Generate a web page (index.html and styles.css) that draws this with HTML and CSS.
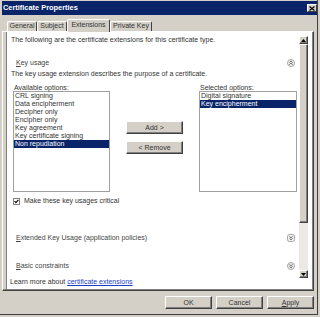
FILE: index.html
```html
<!DOCTYPE html>
<html>
<head>
<meta charset="utf-8">
<link rel="stylesheet" href="styles.css">
</head>
<body>
<div class="window">
  <div class="titlebar">
    <span class="title">Certificate Properties</span>
    <span class="close"><svg width="6" height="5" viewBox="0 0 6 5"><path d="M0.5 0.5 L5.5 4.5 M5.5 0.5 L0.5 4.5" stroke="#000" stroke-width="1.1" fill="none"/></svg></span>
  </div>
  <div class="tabs">
    <div class="tab t-general">General</div>
    <div class="tab t-subject">Subject</div>
    <div class="tab active t-ext">Extensions</div>
    <div class="tab t-pk">Private Key</div>
  </div>
  <div class="panel">
    <div class="page">
      <div class="content">
        <p class="intro">The following are the certificate extensions for this certificate type.</p>
        <div class="head ku">
          <span><u>K</u>ey usage</span>
          <svg class="exp" width="8" height="8" viewBox="0 0 8 8"><circle cx="4" cy="4" r="3.5" fill="#f2f2f2" stroke="#9a9a9a" stroke-width="0.9"/><path d="M2.4 3.6 L4 2.2 L5.6 3.6 M2.4 5.6 L4 4.2 L5.6 5.6" stroke="#555" stroke-width="0.9" fill="none"/></svg>
        </div>
        <p class="desc">The key usage extension describes the purpose of a certificate.</p>
        <div class="options">
          <div class="col">
            <div class="lbl">Available options:</div>
            <div class="listbox">
              <div class="item">CRL signing</div>
              <div class="item">Data encipherment</div>
              <div class="item">Decipher only</div>
              <div class="item">Encipher only</div>
              <div class="item">Key agreement</div>
              <div class="item">Key certificate signing</div>
              <div class="item sel">Non repudiation</div>
            </div>
          </div>
          <div class="movebtns">
            <button class="btn">Add &gt;</button>
            <button class="btn">&lt; Remove</button>
          </div>
          <div class="col right">
            <div class="lbl">Selected options:</div>
            <div class="listbox">
              <div class="item">Digital signature</div>
              <div class="item sel">Key encipherment</div>
            </div>
          </div>
        </div>
        <div class="check">
          <span class="box"><svg width="5" height="5" viewBox="0 0 5 5"><path d="M0.6 2.2 L1.9 3.6 L4.4 0.9" stroke="#000" stroke-width="1.1" fill="none"/></svg></span>
          <span>Make these key usages critical</span>
        </div>
        <div class="head eku">
          <span><u>E</u>xtended Key Usage (application policies)</span>
          <svg class="exp" width="8" height="8" viewBox="0 0 8 8"><rect x="0.5" y="0.5" width="7" height="7" rx="2" fill="#f2f2f2" stroke="#9a9a9a" stroke-width="0.9"/><path d="M2.4 2.4 L4 3.8 L5.6 2.4 M2.4 4.4 L4 5.8 L5.6 4.4" stroke="#555" stroke-width="0.9" fill="none"/></svg>
        </div>
        <div class="head bc">
          <span><u>B</u>asic constraints</span>
          <svg class="exp" width="8" height="8" viewBox="0 0 8 8"><circle cx="4" cy="4" r="3.5" fill="#f2f2f2" stroke="#9a9a9a" stroke-width="0.9"/><path d="M2.4 2.4 L4 3.8 L5.6 2.4 M2.4 4.4 L4 5.8 L5.6 4.4" stroke="#555" stroke-width="0.9" fill="none"/></svg>
        </div>
        <p class="learn">Learn more about <a class="link">certificate extensions</a></p>
      </div>
      <div class="scrollbar">
        <div class="sb-btn"><svg width="5" height="3" viewBox="0 0 5 3"><path d="M0 3 L2.5 0 L5 3 Z" fill="#000"/></svg></div>
        <div class="sb-thumb"></div>
        <div class="sb-track"></div>
        <div class="sb-btn"><svg width="5" height="3" viewBox="0 0 5 3"><path d="M0 0 L2.5 3 L5 0 Z" fill="#000"/></svg></div>
      </div>
    </div>
  </div>
  <div class="footer">
    <button class="btn dlg">OK</button>
    <button class="btn dlg">Cancel</button>
    <button class="btn dlg"><u>A</u>pply</button>
  </div>
</div>
</body>
</html>
```

FILE: styles.css
```css
* { box-sizing: border-box; }
html, body { margin: 0; padding: 0; }
body {
  width: 320px;
  height: 317px;
  overflow: hidden;
  background: #d4d0c8;
  font-family: "Liberation Sans", Arial, sans-serif;
  font-size: 7px;
  line-height: 8px;
  color: #333;
}
p { margin: 0; }

.window {
  width: 318px;
  height: 315px;
  border-right: 1px solid #404040;
  border-bottom: 1px solid #404040;
  padding-top: 1px;
}

.titlebar {
  margin-left: 2px;
  width: 315px;
  height: 14px;
  background: #0a246a;
  display: flex;
  align-items: center;
  justify-content: space-between;
}
.title {
  color: #fff;
  font-weight: bold;
  font-size: 7.4px;
  padding-left: 1px;
}
.close {
  width: 10px;
  height: 8px;
  background: #d4d0c8;
  border: 1px solid;
  border-color: #fff #404040 #404040 #fff;
  display: flex;
  align-items: center;
  justify-content: center;
}

.tabs {
  display: flex;
  align-items: flex-end;
  margin: 4px 0 0 7px;
  height: 12px;
  position: relative;
  z-index: 2;
}
.tab {
  height: 10px;
  line-height: 8px;
  text-align: center;
  background: #d4d0c8;
  border-top: 1px solid #fff;
  border-left: 1px solid #fff;
  border-right: 1px solid #404040;
  border-radius: 2px 2px 0 0;
}
.t-general { width: 30px; }
.t-subject { width: 30px; }
.t-ext { width: 43px; }
.t-pk { width: 42px; }
.tab.active {
  height: 13px;
  margin-bottom: -1px;
  line-height: 10px;
}

.panel {
  margin-left: 2px;
  width: 312px;
  height: 260px;
  border: 1px solid;
  border-color: #fff #404040 #404040 #fff;
  box-shadow: inset -1px -1px #808080;
  padding: 0 1px 1px 3px;
  position: relative;
  z-index: 1;
}
.page {
  height: 257px;
  background: #fff;
  border-left: 1px solid #808080;
  display: flex;
}
.content {
  width: 292px;
}

.intro { margin-top: 4px; padding-left: 4px; }
.head {
  display: flex;
  align-items: center;
  justify-content: space-between;
  height: 8px;
  padding-left: 9px;
  padding-right: 4px;
  color: #444;
}
.head u, .dlg u { text-decoration-thickness: 1px; text-underline-offset: 1px; }
.ku { margin-top: 15px; }
.desc { margin-top: 3px; padding-left: 4px; }

.options {
  display: flex;
  gap: 16px;
  margin-top: 6px;
  padding-left: 6px;
}
.col { width: 97px; }
.col.right { width: 98px; }
.lbl { height: 7px; line-height: 7px; padding-left: 1px; }
.listbox {
  height: 101px;
  border: 1px solid #a0a0a0;
  background: #fff;
}
.item {
  height: 8px;
  line-height: 8px;
  padding-left: 1px;
  white-space: nowrap;
}
.item.sel { background: #0a246a; color: #fff; }

.movebtns {
  width: 57px;
  padding-top: 37px;
  display: flex;
  flex-direction: column;
  gap: 7px;
}
.btn {
  font: inherit;
  color: #333;
  height: 13px;
  padding: 0;
  background: #d4d0c8;
  border: 1px solid;
  border-color: #fff #404040 #404040 #fff;
  box-shadow: inset -1px -1px #808080;
  line-height: 10px;
}

.check {
  display: flex;
  align-items: center;
  gap: 4px;
  margin-top: 5px;
  padding-left: 6px;
  height: 8px;
}
.box {
  width: 7px;
  height: 7px;
  border: 1px solid #808080;
  background: #fff;
  display: flex;
  align-items: center;
  justify-content: center;
}
.eku { margin-top: 29px; }
.bc { margin-top: 20px; }
.learn { margin-top: 8px; padding-left: 3px; }
.link { color: #1a3fc4; text-decoration: underline; }

.scrollbar {
  width: 9px;
  height: 242px;
  margin: 4px 4px 0 0;
  display: flex;
  flex-direction: column;
}
.sb-btn, .sb-thumb {
  background: #d4d0c8;
  border: 1px solid;
  border-color: #fff #404040 #404040 #fff;
  box-shadow: inset -1px -1px #808080;
}
.sb-btn {
  height: 8px;
  display: flex;
  align-items: center;
  justify-content: center;
}
.sb-thumb { height: 179px; }
.sb-track { flex: 1; background: #ebe9e4; }

.footer {
  display: flex;
  justify-content: flex-end;
  gap: 4px;
  margin-top: 5px;
  padding-right: 3px;
}
.dlg { width: 47px; }
```
